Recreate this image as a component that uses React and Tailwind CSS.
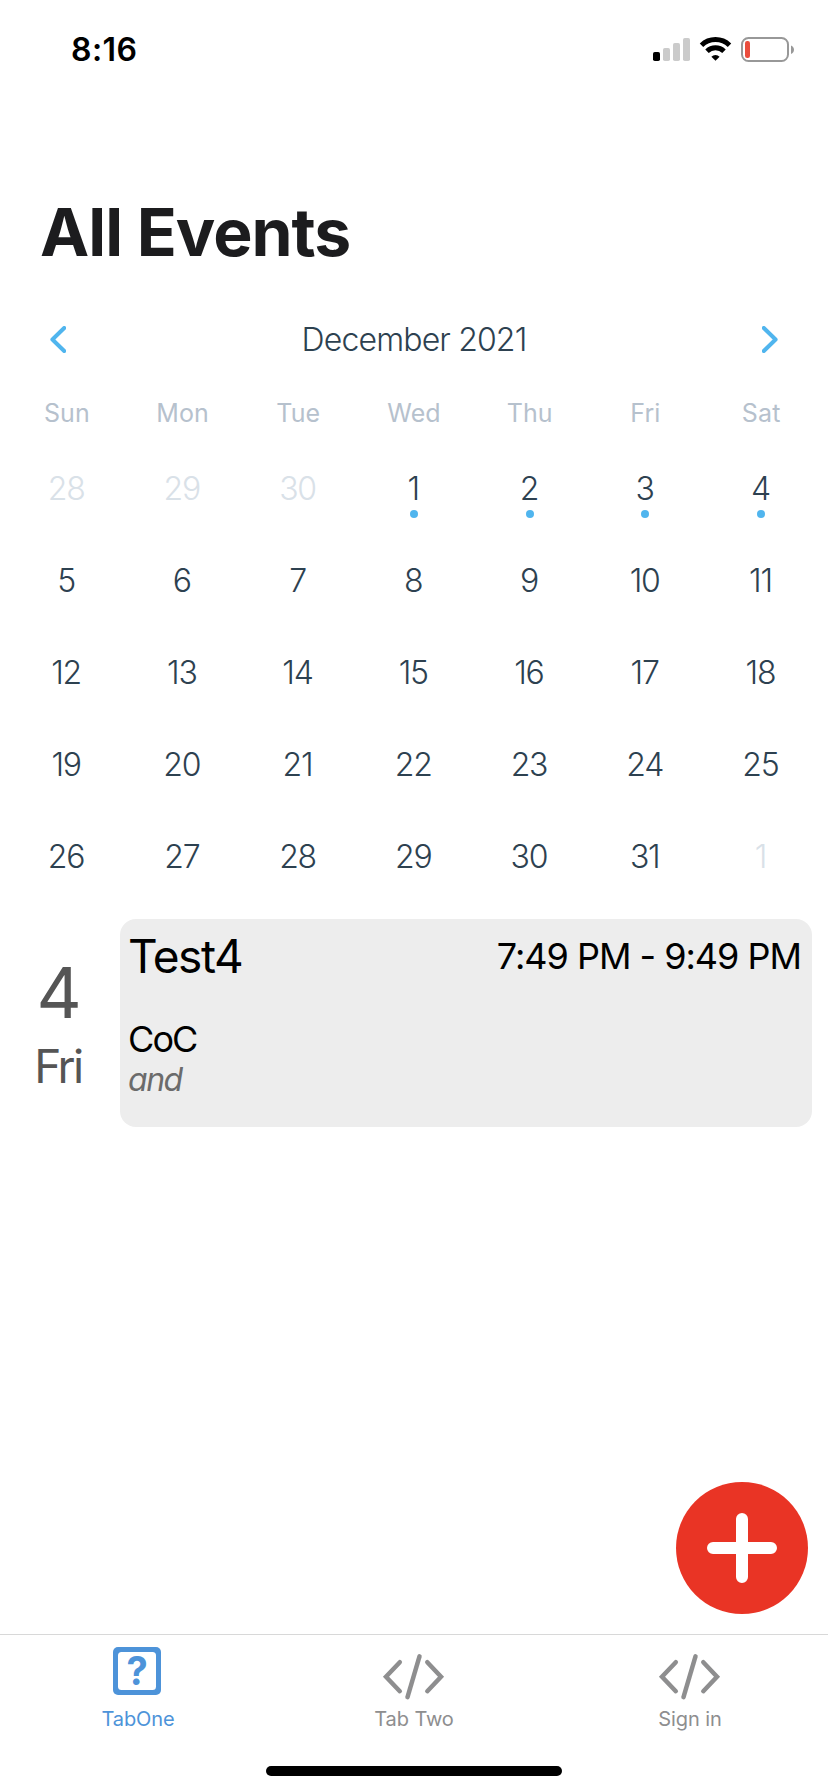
import React from "react";

const WEEKDAYS = ["Sun", "Mon", "Tue", "Wed", "Thu", "Fri", "Sat"];

const DAYS = [
  { day: 28, outside: true },
  { day: 29, outside: true },
  { day: 30, outside: true },
  ...Array.from({ length: 31 }, (_, i) => ({ day: i + 1, marked: i < 4 })),
  { day: 1, outside: true },
];

function StatusBar() {
  return (
    <header className="flex h-[100px] items-center justify-between pr-[33px] pl-[71px]">
      <span className="text-[32px] leading-none font-semibold tracking-[0.4px] text-black">8:16</span>
      <svg width="142" height="26" viewBox="0 0 142 26" fill="none" aria-hidden="true">
        <rect x="0" y="15" width="7" height="9" rx="1.8" fill="#000" />
        <rect x="10" y="11" width="7" height="13" rx="1.8" fill="#cbcbcb" />
        <rect x="20" y="6" width="7" height="18" rx="1.8" fill="#cbcbcb" />
        <rect x="30" y="1" width="7" height="23" rx="1.8" fill="#cbcbcb" />
        <g stroke="#000" strokeWidth="5">
          <path d="M48.5 8.2 A20.2 20.2 0 0 1 76.500 8.2" />
          <path d="M54 14.200 A12.300 12.300 0 0 1 71 14.200" />
        </g>
        <path d="M62.500 23.800 L58.400 19.800 A5.800 5.800 0 0 1 66.600 19.800 Z" fill="#000" />
        <rect x="89" y="1" width="46" height="23" rx="6.5" stroke="#989898" strokeWidth="2" />
        <rect x="92" y="4" width="5" height="17" rx="2.2" fill="#ea4d3d" />
        <path d="M138 8.500 C142 10 142 15.500 138 17 Z" fill="#989898" />
      </svg>
    </header>
  );
}

function Chevron({ flip }) {
  return (
    <svg width="16" height="28" viewBox="0 0 16 28" fill="none" className={flip ? "-scale-x-100" : ""} aria-hidden="true">
      <path d="M14.200 2 L2.400 13.500 L14.200 25" stroke="#50b5ee" strokeWidth="4" strokeLinecap="round" strokeLinejoin="round" />
    </svg>
  );
}

function Calendar() {
  return (
    <section>
      <div className="flex h-[50px] items-center justify-between px-[50px]">
        <Chevron />
        <h2 className="text-[32px] leading-none font-light tracking-[-0.85px] text-[#2d4150]">December 2021</h2>
        <Chevron flip />
      </div>
      <div className="mt-[33px] grid h-[30px] grid-cols-7 px-[9px]">
        {WEEKDAYS.map((name) => (
          <span key={name} className="text-center text-[25px] leading-[30px] tracking-[0.1px] text-[#b6c1cd]">
            {name}
          </span>
        ))}
      </div>
      <div className="mt-[14px] grid grid-cols-7 px-[9px]">
        {DAYS.map(({ day, outside, marked }, i) => (
          <div key={i} className="flex h-[92px] flex-col items-center pt-[31px]">
            <span
              className={
                outside
                  ? "mr-[1.5px] text-[32px] leading-8 font-light tracking-[-1.2px] text-[#d9e1e8]"
                  : "mr-[1.5px] text-[32px] leading-8 font-light tracking-[-1.2px] text-[#2d4150]"
              }
            >
              {day}
            </span>
            {marked && <span className="mt-[5px] size-2 rounded-full bg-[#50b5ee]" />}
          </div>
        ))}
      </div>
    </section>
  );
}

function Agenda() {
  return (
    <section className="mt-[17px] flex h-[208px] pr-4">
      <div className="flex w-[120px] flex-col items-center pt-[39px] pr-[2px] text-[#555555]">
        <span className="text-[70px] leading-[70px]">4</span>
        <span className="mt-[15px] mr-[2px] text-[46px] leading-[46px] tracking-[-2.500px]">Fri</span>
      </div>
      <article className="flex-1 rounded-2xl bg-[#ededed] pr-[11px] pl-2 text-black">
        <div className="flex items-center justify-between pt-[14px]">
          <h3 className="text-[46px] leading-[46px] tracking-[-1.400px]">Test4</h3>
          <span className="text-[36px] leading-[46px] tracking-[-1.020px]">7:49 PM - 9:49 PM</span>
        </div>
        <p className="mt-[42px] text-[36px] leading-[36px] tracking-[-1.900px]">CoC</p>
        <p className="mt-[7px] text-[32px] leading-[32px] tracking-[-1.500px] text-[#6b6b6b] italic">and</p>
      </article>
    </section>
  );
}

function CodeIcon() {
  return (
    <svg width="62" height="48" viewBox="0 0 62 48" className="overflow-visible" fill="none" stroke="#8e8e8f" strokeWidth="4.500" strokeLinecap="round" strokeLinejoin="miter" aria-hidden="true">
      <path d="M16.800 15.200 L3 29.700 L16.800 44.200" />
      <path d="M36.500 9.300 L24.500 50.200" />
      <path d="M44.300 15.200 L58 29.700 L44.300 44.200" />
    </svg>
  );
}

function HelpBoxIcon() {
  return (
    <div className="mr-[2px] size-12 rounded-[5px] bg-[#4d93d9] p-[5px]">
      <div className="flex size-full items-center justify-center rounded-[3.5px] bg-white text-[40px] leading-[38px] font-bold text-[#4d93d9]">
        <span className="scale-x-95">?</span>
      </div>
    </div>
  );
}

function Tab({ icon, label, active }) {
  return (
    <div className={active ? "flex flex-1 flex-col items-center text-[#4d93d9]" : "flex flex-1 flex-col items-center text-[#8e8e8f]"}>
      {icon}
      <span className="mt-[14px] text-[20px] leading-5 tracking-[-0.1px]">{label}</span>
    </div>
  );
}

export default function App() {
  return (
    <div className="relative flex h-[1792px] w-[828px] flex-col bg-white font-['Inter',sans-serif]">
      <StatusBar />
      <h1 className="mt-[99px] pl-10 text-[66px] leading-[66px] font-bold tracking-[-1px] text-[#1c1c1e]">All Events</h1>
      <div className="mt-[50px]">
        <Calendar />
      </div>
      <Agenda />
      <button className="absolute top-[1482px] left-[676px] flex size-[132px] items-center justify-center rounded-full bg-[#e93425]" aria-label="Add event">
        <svg width="70" height="70" viewBox="0 0 70 70" stroke="#fff" strokeWidth="12" strokeLinecap="round" aria-hidden="true">
          <path d="M35 6 V64 M6 35 H64" />
        </svg>
      </button>
      <nav className="mt-auto flex h-[158px] flex-col items-center border-t border-[#d8d8d8] pt-3">
        <div className="flex w-full">
          <Tab active icon={<HelpBoxIcon />} label="TabOne" />
          <Tab icon={<CodeIcon />} label="Tab Two" />
          <Tab icon={<CodeIcon />} label="Sign in" />
        </div>
        <div className="mt-auto mb-4 h-[10px] w-[296px] rounded-full bg-black" />
      </nav>
    </div>
  );
}
